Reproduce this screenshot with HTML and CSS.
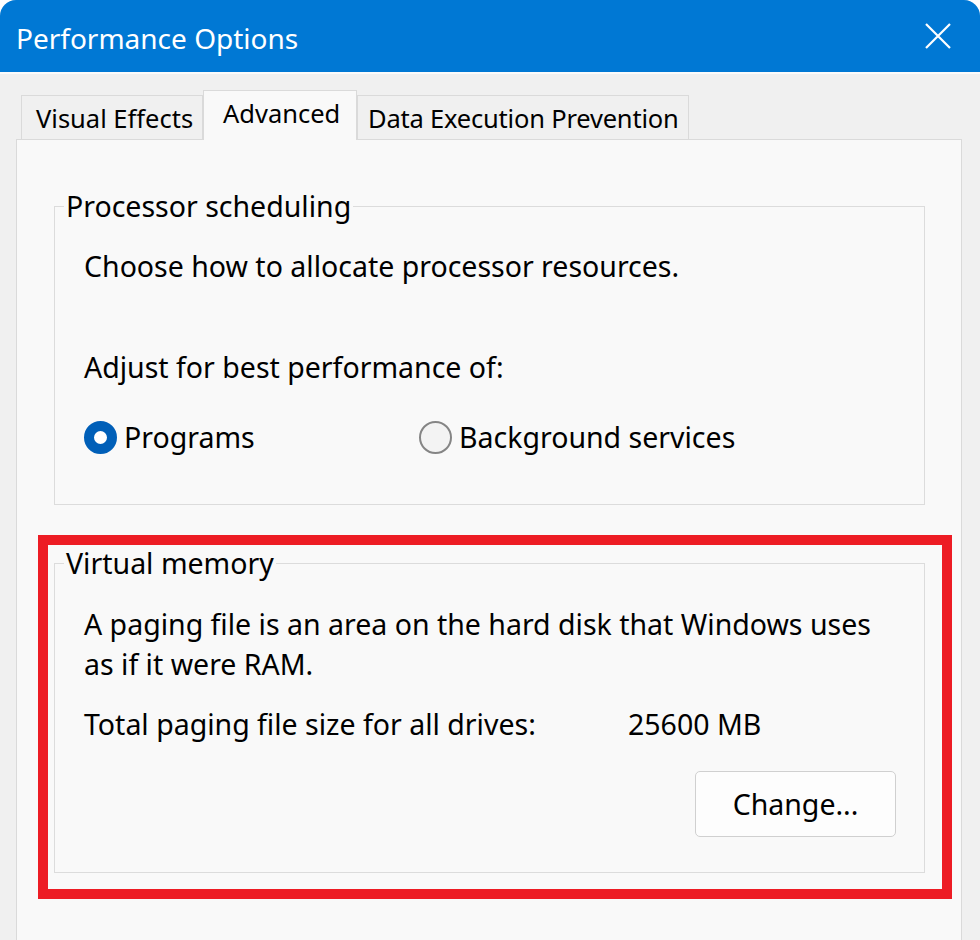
FILE: index.html
```html
<!DOCTYPE html>
<html>
<head>
  <title>Performance Options</title>
  <link rel="stylesheet" href="styles.css">
</head>
<body>
  <div class="window">
    <div class="titlebar">
      <span class="title">Performance Options</span>
      <button class="close" aria-label="Close">
        <svg width="26" height="26" viewBox="0 0 26 26"><path d="M1 1 L25 25 M25 1 L1 25" stroke="#fff" stroke-width="2.2" fill="none"/></svg>
      </button>
    </div>

    <div class="tabs">
      <div class="tab visual">Visual Effects</div>
      <div class="tab advanced active">Advanced</div>
      <div class="tab dep">Data Execution Prevention</div>
    </div>

    <div class="panel">
      <fieldset class="group sched">
        <legend>Processor scheduling</legend>
        <p class="line">Choose how to allocate processor resources.</p>
        <p class="line adjust">Adjust for best performance of:</p>
        <div class="radios">
          <label class="radio"><span class="dot checked"></span>Programs</label>
          <label class="radio"><span class="dot"></span>Background services</label>
        </div>
      </fieldset>

      <div class="marked">
        <fieldset class="group vm">
          <legend>Virtual memory</legend>
          <p class="line">A paging file is an area on the hard disk that Windows uses as if it were RAM.</p>
          <div class="total">
            <span>Total paging file size for all drives:</span>
            <span>25600 MB</span>
          </div>
          <div class="actions">
            <button class="btn">Change...</button>
          </div>
        </fieldset>
      </div>
    </div>
  </div>
</body>
</html>
```

FILE: styles.css
```css
body { margin: 0; background: #fff; font-family: "Noto Sans", "Open Sans", sans-serif; color: #000; }
.window { height: 940px; background: #f0f0f0; border-radius: 16px 16px 0 0; overflow: hidden; }

.titlebar { height: 74px; background: #0078d4; display: flex; align-items: center; justify-content: space-between; padding: 0 16px; border-bottom: 2px solid #fbfbfb; box-sizing: border-box; }
.title { color: #fff; font-size: 28px; margin-top: 4px; }
.close { background: none; border: none; padding: 0; margin-right: 13px; display: flex; }

/* tab strip */
.tabs { display: flex; align-items: flex-end; padding-left: 21px; height: 65px; box-sizing: border-box; font-size: 25.5px; }
.tab { height: 44px; line-height: 44px; border: 1px solid #dadada; border-bottom: none; background: #f0f0f0; box-sizing: border-box; white-space: nowrap; }
.tab.visual { width: 182px; padding-left: 14px; }
.tab.advanced { width: 154px; padding-left: 19px; }
.tab.dep { width: 332px; padding-left: 10px; letter-spacing: -0.2px; }
.tab.active { height: 50px; line-height: 44px; background: #f9f9f9; position: relative; top: 1px; }

.panel { margin: 0 18px 0 16px; height: 820px; border: 1px solid #dadada; background: #f9f9f9; box-sizing: border-box; padding: 46px 36px 0 37px; font-size: 28.5px; }

/* group boxes */
.group { margin: 0; border: 1px solid #dcdcdc; padding: 0 28px 0 29px; box-sizing: border-box; }
.group legend { padding: 0 2px; margin-left: -20px; line-height: 40px; }
.line { margin: 0; line-height: 40px; }

.sched { height: 319px; padding-top: 20px; }
.adjust { margin-top: 61px; }
.radios { display: grid; grid-template-columns: 335px 1fr; margin-top: 30px; line-height: 40px; }
.radio { display: flex; align-items: center; gap: 7px; }
.dot { width: 33px; height: 33px; border-radius: 50%; border: 2px solid #858585; background: #f3f3f3; box-sizing: border-box; }
.dot.checked { border: 10px solid #005fb8; background: #fff; }

/* highlighted virtual memory section */
.marked { position: relative; margin-top: 38px; }
.marked::after { content: ""; position: absolute; top: -8px; bottom: -26px; left: -16px; right: -27px; border: 10px solid #ed1c24; }

.vm { height: 330px; padding-top: 21px; }
.total { display: grid; grid-template-columns: 544px 1fr; margin-top: 20px; line-height: 40px; }
.actions { display: flex; justify-content: flex-end; margin-top: 27px; }
.btn { width: 201px; height: 66px; font: inherit; background: #fdfdfd; border: 1px solid #d0d0d0; border-radius: 5px; color: #000; }
```
